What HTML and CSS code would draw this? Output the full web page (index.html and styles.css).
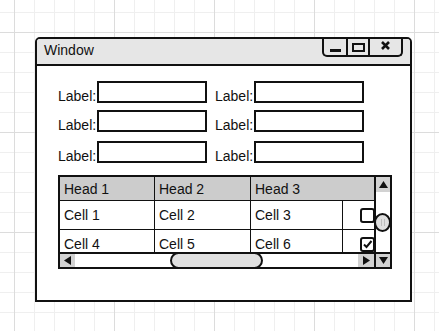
FILE: index.html
```html
<!DOCTYPE html>
<html lang="en">
  <head>
    <meta charset="UTF-8" />
    <title>Window mockup</title>
    <link rel="stylesheet" href="styles.css">
  </head>
  <body>
    <div class="window">
      <div class="titlebar">
        <span class="title">Window</span>
        <div class="winbtns">
          <span class="wbtn wbtn-min"><i class="dash"></i></span>
          <span class="wbtn wbtn-max"><i class="box"></i></span>
          <span class="wbtn wbtn-close">
            <svg width="9" height="9" viewBox="0 0 9 9"><path d="M1 1L8 8M8 1L1 8" stroke="#111" stroke-width="2.6" /></svg>
          </span>
        </div>
      </div>
      <div class="content">
        <div class="form">
          <div class="field"><span class="label">Label:</span><span class="input"></span></div>
          <div class="field"><span class="label">Label:</span><span class="input"></span></div>
          <div class="field"><span class="label">Label:</span><span class="input"></span></div>
          <div class="field"><span class="label">Label:</span><span class="input"></span></div>
          <div class="field field-low"><span class="label">Label:</span><span class="input"></span></div>
          <div class="field field-low"><span class="label">Label:</span><span class="input"></span></div>
        </div>
        <div class="grid-box">
          <div class="table">
            <div class="cell head">Head 1</div>
            <div class="cell head">Head 2</div>
            <div class="cell head head-wide">Head 3</div>
            <div class="cell">Cell 1</div>
            <div class="cell">Cell 2</div>
            <div class="cell">Cell 3</div>
            <div class="cell cell-check"><span class="check"></span></div>
            <div class="cell">Cell 4</div>
            <div class="cell">Cell 5</div>
            <div class="cell">Cell 6</div>
            <div class="cell cell-check">
              <span class="check">
                <svg width="11" height="11" viewBox="0 0 11 11"><path d="M2 5.5L4.5 8L9.5 2" fill="none" stroke="#111" stroke-width="2" /></svg>
              </span>
            </div>
          </div>
          <div class="vscroll">
            <span class="arrow">
              <svg width="9" height="7" viewBox="0 0 9 7"><polygon points="0,7 9,7 4.5,0" fill="#111" /></svg>
            </span>
            <span class="vthumb"><i></i><i></i></span>
            <span class="arrow arrow-down">
              <svg width="9" height="7" viewBox="0 0 9 7"><polygon points="0,0 9,0 4.5,7" fill="#111" /></svg>
            </span>
          </div>
          <div class="hscroll">
            <span class="arrow">
              <svg width="7" height="9" viewBox="0 0 7 9"><polygon points="7,0 7,9 0,4.5" fill="#111" /></svg>
            </span>
            <span class="hthumb"></span>
            <span class="arrow arrow-right">
              <svg width="7" height="9" viewBox="0 0 7 9"><polygon points="0,0 0,9 7,4.5" fill="#111" /></svg>
            </span>
          </div>
        </div>
      </div>
    </div>
  </body>
</html>
```

FILE: styles.css
```css
* {
  box-sizing: border-box;
}
body {
  margin: 0;
  height: 331px;
  padding: 37px 0 0 35px;
  font-family: "Liberation Sans", Arial, sans-serif;
  font-size: 14px;
  color: #111;
  background-color: #fff;
  background-image:
    linear-gradient(#dcdcdc 1px, transparent 1px),
    linear-gradient(90deg, #dcdcdc 1px, transparent 1px),
    linear-gradient(#efefef 1px, transparent 1px),
    linear-gradient(90deg, #efefef 1px, transparent 1px);
  background-size: 100px 100px, 100px 100px, 20px 20px, 20px 20px;
  background-position: 0 32px, 14px 0, 0 12px, 14px 0;
}
.window {
  width: 377px;
  height: 265px;
  border: 2px solid #111;
  border-radius: 5px 5px 0 0;
  background: #fff;
  display: flex;
  flex-direction: column;
}
.titlebar {
  height: 27px;
  border-bottom: 2px solid #111;
  border-radius: 3px 3px 0 0;
  background: #e6e6e6;
  display: flex;
  justify-content: space-between;
  align-items: flex-start;
  padding-left: 7px;
}
.title {
  line-height: 23px;
}
.winbtns {
  display: flex;
  height: 18px;
  margin-right: 7px;
  border: 2px solid #111;
  border-top: none;
  border-radius: 0 0 5px 5px;
}
.wbtn {
  display: flex;
  justify-content: center;
  align-items: center;
  width: 22px;
}
.wbtn + .wbtn {
  border-left: 2px solid #111;
}
.wbtn-min {
  align-items: flex-end;
  padding-bottom: 3px;
}
.wbtn-close {
  width: 33px;
  padding-bottom: 3px;
}
.dash {
  display: block;
  width: 11px;
  height: 3px;
  background: #111;
}
.box {
  display: block;
  width: 13px;
  height: 9px;
  border: 2px solid #111;
}
.content {
  padding: 15px 0 0 21px;
}
.form {
  display: grid;
  grid-template-columns: 149px 149px;
  column-gap: 8px;
  row-gap: 7px;
}
.field {
  display: flex;
}
.field-low {
  margin-top: 2px;
}
.label {
  width: 39px;
  line-height: 14px;
  padding-top: 8px;
}
.input {
  width: 110px;
  height: 22px;
  border: 2px solid #111;
  background: #fff;
}
.grid-box {
  margin-top: 12px;
  width: 334px;
  height: 94px;
  border: 2px solid #111;
  display: grid;
  grid-template-columns: 1fr 16px;
  grid-template-rows: 1fr 15px;
}
.table {
  grid-row: 1;
  grid-column: 1;
  overflow: hidden;
  display: grid;
  grid-template-columns: 95px 96px 92px 1fr;
  grid-template-rows: 24px 29px 29px;
}
.cell {
  display: flex;
  align-items: center;
  padding-left: 4px;
  border-bottom: 1px solid #111;
  border-right: 1px solid #111;
}
.head {
  background: #cccccc;
}
.head-wide {
  grid-column: span 2;
  border-right: none;
}
.cell-check {
  justify-content: flex-end;
  border-right: none;
}
.check {
  display: flex;
  width: 15px;
  height: 15px;
  margin-right: -1px;
  border: 2px solid #111;
  border-radius: 3px;
  background: #fff;
}
.vscroll {
  grid-row: 1 / 3;
  grid-column: 2;
  border-left: 2px solid #111;
  display: flex;
  flex-direction: column;
}
.arrow {
  display: flex;
  justify-content: center;
  align-items: center;
  height: 15px;
  background: #d2d2d2;
}
.arrow-down {
  margin-top: auto;
  height: 15px;
  border-top: 2px solid #111;
}
.vthumb {
  display: flex;
  justify-content: center;
  align-items: center;
  gap: 2px;
  width: 17px;
  height: 19px;
  margin: 21px 0 0 -2px;
  border: 2px solid #111;
  border-radius: 50%;
  background: #e0e0e0;
}
.vthumb i {
  width: 1px;
  height: 7px;
  background: #bdbdbd;
}
.hscroll {
  grid-row: 2;
  grid-column: 1;
  border-top: 2px solid #111;
  display: flex;
}
.hscroll .arrow {
  width: 15px;
  height: auto;
}
.hscroll .arrow-right {
  width: 16px;
  margin-left: auto;
}
.hthumb {
  width: 93px;
  height: 17px;
  margin: -2px 0 -2px 95px;
  border: 2px solid #111;
  border-radius: 9px;
  background: #e0e0e0;
}
```
